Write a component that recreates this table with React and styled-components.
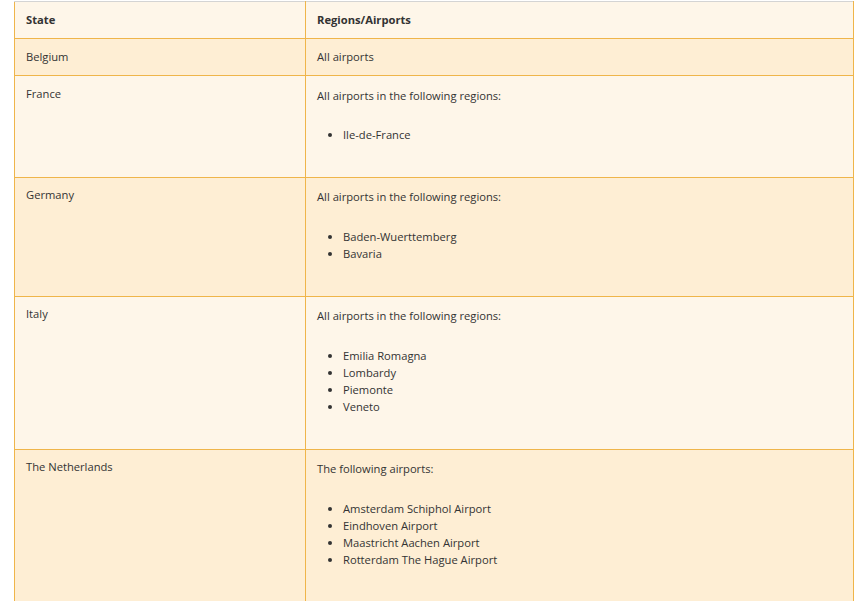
import React from "react";
import styled, { createGlobalStyle } from "styled-components";

const rows = [
  { state: "Belgium", intro: "All airports" },
  {
    state: "France",
    intro: "All airports in the following regions:",
    items: ["Ile-de-France"],
  },
  {
    state: "Germany",
    intro: "All airports in the following regions:",
    items: ["Baden-Wuerttemberg", "Bavaria"],
  },
  {
    state: "Italy",
    intro: "All airports in the following regions:",
    items: ["Emilia Romagna", "Lombardy", "Piemonte", "Veneto"],
  },
  {
    state: "The Netherlands",
    intro: "The following airports:",
    items: [
      "Amsterdam Schiphol Airport",
      "Eindhoven Airport",
      "Maastricht Aachen Airport",
      "Rotterdam The Hague Airport",
    ],
  },
];

const GlobalStyle = createGlobalStyle`
  html, body {
    margin: 0;
    background: #ffffff;
  }
  body {
    font-family: "Open Sans", "Liberation Sans", sans-serif;
    color: #333333;
    font-size: 11.2px;
  }
`;

const Page = styled.div`
  padding: 1px 0 0 14px;
`;

const Table = styled.table`
  width: 840px;
  border-collapse: collapse;
  table-layout: fixed;
`;

const Row = styled.tr`
  background: ${(p) => (p.$shade ? "#feeed4" : "#fef6e9")};
`;

const HeadCell = styled.th`
  text-align: left;
  font-weight: 700;
  font-size: 11.2px;
  line-height: 17px;
  padding: 8.5px 11px 10.5px;
  border: 1px solid #efb54a;
  border-top: 1px solid #d4d4d4;
  color: #333333;
`;

const Cell = styled.td`
  vertical-align: top;
  font-size: 11.2px;
  line-height: 17px;
  padding: 8.5px 11px 10.5px;
  border: 1px solid #efb54a;
  color: #333333;
`;

const Intro = styled.p`
  margin: ${(p) => (p.$lead ? "2px 0 0" : "0")};
`;

const List = styled.ul`
  margin: 22.2px 0 23.8px;
  padding-left: 26px;
  list-style: disc;
`;

const Item = styled.li`
  line-height: 17px;
`;

export default function App() {
  return (
    <Page>
      <GlobalStyle />
      <Table>
        <colgroup>
          <col style={{ width: "291px" }} />
          <col />
        </colgroup>
        <thead>
          <Row>
            <HeadCell>State</HeadCell>
            <HeadCell>Regions/Airports</HeadCell>
          </Row>
        </thead>
        <tbody>
          {rows.map((r, i) => (
            <Row key={r.state} $shade={i % 2 === 0}>
              <Cell>{r.state}</Cell>
              <Cell>
                <Intro $lead={!!r.items}>{r.intro}</Intro>
                {r.items && (
                  <List>
                    {r.items.map((it) => (
                      <Item key={it}>{it}</Item>
                    ))}
                  </List>
                )}
              </Cell>
            </Row>
          ))}
        </tbody>
      </Table>
    </Page>
  );
}
